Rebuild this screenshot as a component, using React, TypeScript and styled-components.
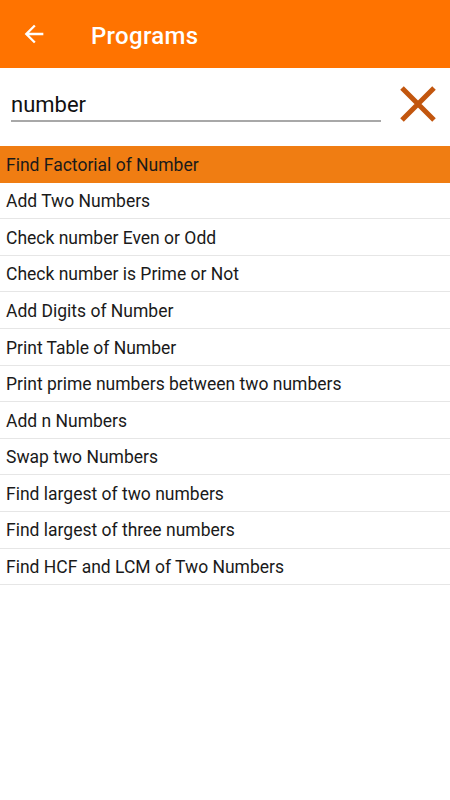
import React, { useState } from "react";
import styled, { createGlobalStyle } from "styled-components";

const GlobalStyle = createGlobalStyle`
  html, body {
    margin: 0;
    padding: 0;
    background: #ffffff;
    font-family: Roboto, "Noto Sans", sans-serif;
  }
`;

const Page = styled.div`
  width: 450px;
  min-height: 800px;
  background: #ffffff;
`;

const Toolbar = styled.div`
  height: 68px;
  background: #ff7300;
  display: flex;
  align-items: center;
  padding-left: 20px;
  box-sizing: border-box;
`;

const BackButton = styled.button`
  background: none;
  border: none;
  padding: 0;
  width: 28px;
  height: 28px;
  display: flex;
  align-items: center;
  justify-content: center;
  cursor: pointer;
`;

const Title = styled.h1`
  margin: 3px 0 0 43px;
  color: #ffffff;
  font-size: 24px;
  font-weight: 500;
  letter-spacing: 0.3px;
`;

const SearchRow = styled.div`
  height: 78px;
  display: flex;
  align-items: flex-start;
  padding: 16px 12px 0 11px;
  box-sizing: border-box;
`;

const SearchInput = styled.input`
  flex: 1;
  max-width: 370px;
  height: 38px;
  box-sizing: border-box;
  border: none;
  border-bottom: 2px solid #a8a8a8;
  outline: none;
  font-family: Roboto, sans-serif;
  font-size: 22px;
  color: #111;
  padding: 4px 0 0 0;
  background: transparent;
`;

const ClearButton = styled.button`
  margin-left: auto;
  background: none;
  border: none;
  padding: 0;
  width: 40px;
  height: 40px;
  display: flex;
  align-items: center;
  justify-content: center;
  cursor: pointer;
`;

const List = styled.ul`
  list-style: none;
  margin: 0;
  padding: 0;
`;

const Row = styled.li<{ $active?: boolean }>`
  height: 35.6px;
  box-sizing: content-box;
  display: flex;
  align-items: center;
  padding: 0 0 0 6px;
  font-size: 17.5px;
  line-height: 1;
  color: #1a1a1a;
  background: ${({ $active }) => ($active ? "#f07d12" : "#ffffff")};
  border-bottom: 1px solid ${({ $active }) => ($active ? "#f07d12" : "#e6e6e6")};

  span {
    padding-top: 3px;
  }
`;

const items = [
  "Find Factorial of Number",
  "Add Two Numbers",
  "Check number Even or Odd",
  "Check number is Prime or Not",
  "Add Digits of Number",
  "Print Table of Number",
  "Print prime numbers between two numbers",
  "Add n Numbers",
  "Swap two Numbers",
  "Find largest of two numbers",
  "Find largest of three numbers",
  "Find HCF and LCM of Two Numbers",
];

export default function App() {
  const [query, setQuery] = useState("number");

  return (
    <Page>
      <GlobalStyle />
      <Toolbar>
        <BackButton type="button">
          <svg width="28" height="28" viewBox="0 0 24 24">
            <path
              d="M20 11H7.83l5.59-5.59L12 4l-8 8 8 8 1.41-1.41L7.83 13H20v-2z"
              fill="#ffffff"
            />
          </svg>
        </BackButton>
        <Title>Programs</Title>
      </Toolbar>

      <SearchRow>
        <SearchInput value={query} onChange={(e) => setQuery(e.target.value)} />
        <ClearButton type="button" onClick={() => setQuery("")}>
          <svg width="38" height="36" viewBox="0 0 38 36">
            <path
              d="M3 2 L35 34 M35 2 L3 34"
              stroke="#c2560e"
              strokeWidth="5"
              strokeLinecap="butt"
            />
          </svg>
        </ClearButton>
      </SearchRow>

      <List>
        {items.map((item, i) => (
          <Row key={item} $active={i === 0}>
            <span>{item}</span>
          </Row>
        ))}
      </List>
    </Page>
  );
}
